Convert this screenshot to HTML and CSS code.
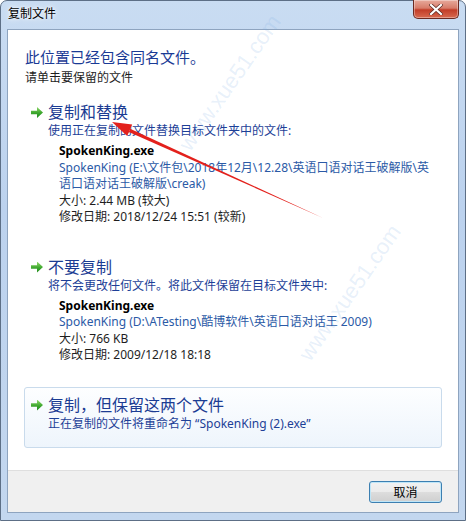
FILE: index.html
```html
<!DOCTYPE html>
<html>
<head>
    <meta charset="UTF-8">
    <title>复制文件</title>
    <link rel="stylesheet" href="styles.css">
</head>
<body>
    <div class="window">
        <div class="titlebar">
            <span class="title">复制文件</span>
            <button class="close-btn" aria-label="关闭">
                <svg width="14" height="11" viewBox="0 0 14 11">
                    <path d="M2 1 L12 10 M12 1 L2 10" stroke="#5a2a22" stroke-width="3.6" stroke-linecap="square"/>
                    <path d="M2 1 L12 10 M12 1 L2 10" stroke="#fff" stroke-width="2.2" stroke-linecap="square"/>
                </svg>
            </button>
        </div>

        <div class="client">
            <div class="content">
                <h1 class="main-instruction">此位置已经包含同名文件。</h1>
                <p class="hint">请单击要保留的文件</p>

                <div class="option">
                    <span class="arrow"></span>
                    <div class="option-body">
                        <div class="option-title">复制和替换</div>
                        <div class="option-desc">使用正在复制的文件替换目标文件夹中的文件:</div>
                        <div class="file-info">
                            <div class="file-name">SpokenKing.exe</div>
                            <div class="file-path">SpokenKing (E:\文件包\2018年12月\12.28\英语口语对话王破解版\英语口语对话王破解版\creak)</div>
                            <div>大小: 2.44 MB (较大)</div>
                            <div>修改日期: 2018/12/24 15:51 (较新)</div>
                        </div>
                    </div>
                </div>

                <div class="option">
                    <span class="arrow"></span>
                    <div class="option-body">
                        <div class="option-title">不要复制</div>
                        <div class="option-desc">将不会更改任何文件。将此文件保留在目标文件夹中:</div>
                        <div class="file-info">
                            <div class="file-name">SpokenKing.exe</div>
                            <div class="file-path">SpokenKing (D:\ATesting\酷博软件\英语口语对话王 2009)</div>
                            <div>大小: 766 KB</div>
                            <div>修改日期: 2009/12/18 18:18</div>
                        </div>
                    </div>
                </div>

                <div class="option focused">
                    <span class="arrow"></span>
                    <div class="option-body">
                        <div class="option-title">复制，但保留这两个文件</div>
                        <div class="option-desc">正在复制的文件将重命名为 “SpokenKing (2).exe”</div>
                    </div>
                </div>
            </div>

            <div class="footer">
                <button class="btn">取消</button>
            </div>
        </div>
    </div>

    <!-- red annotation arrow drawn over the dialog -->
    <svg class="annotation" width="466" height="521" viewBox="0 0 466 521">
        <polygon points="323,218 130.2,128.8 128.8,132 " fill="#e3211c"/>
        <polygon points="112,122 132.2,124.6 127.2,136" fill="#e3211c"/>
    </svg>

    <div class="watermark wm-1">www.xue51.com</div>
    <div class="watermark wm-2">www.xue51.com</div>
</body>
</html>
```

FILE: styles.css
```css
* {
    box-sizing: border-box;
}

body {
    margin: 0;
    width: 466px;
    height: 521px;
    font-family: "Noto Sans", "Noto Sans CJK SC", sans-serif;
    font-size: 12px;
    color: #1e1e1e;
    overflow: hidden;
    position: relative;
}

.window {
    width: 466px;
    height: 521px;
    display: flex;
    flex-direction: column;
    padding: 0 6px 7px;
    border: 1px solid #5d6f86;
    border-radius: 7px 7px 0 0;
    background: linear-gradient(180deg, #c9dcf2 0%, #bcd2ee 40%, #c3d7ef 100%);
}

.titlebar {
    height: 28px;
    display: flex;
    justify-content: space-between;
    align-items: flex-start;
}

.title {
    padding: 4px 0 0 1px;
    line-height: 17px;
    color: #000;
    text-shadow: 0 0 6px #fff, 0 0 3px #fff;
}

.close-btn {
    width: 46px;
    height: 19px;
    margin-top: -1px;
    padding: 0;
    display: flex;
    align-items: center;
    justify-content: center;
    border: 1px solid #6b2a22;
    border-top: none;
    border-radius: 0 0 5px 5px;
    background: linear-gradient(180deg, #e7aa9c 0%, #d77c6a 45%, #c23d28 55%, #d86a50 100%);
    box-shadow: inset 0 0 0 1px rgba(255, 255, 255, 0.35);
}

.client {
    flex: 1;
    display: flex;
    flex-direction: column;
    border: 1px solid #8ea4bf;
    background: #fff;
}

.content {
    flex: 1;
    padding: 17px 16px 0;
}

.main-instruction {
    margin: 0 0 2px 1px;
    font-size: 15px;
    font-weight: normal;
    line-height: 20px;
    color: #1a3a95;
}

.hint {
    margin: 0 0 8px 1px;
    line-height: 17px;
}

.option {
    display: grid;
    grid-template-columns: 17px 1fr;
    padding: 7px 8px 15px 6px;
    margin-bottom: 7px;
    border: 1px solid transparent;
    border-radius: 3px;
}

.option.focused {
    border-color: #c9dbec;
    background: linear-gradient(180deg, #fdfeff 0%, #eef5fc 100%);
}

.arrow {
    width: 12px;
    height: 11px;
    margin-top: 5px;
    background: linear-gradient(180deg, #8fd86a 0%, #3aa52c 55%, #1f8a1c 100%);
    clip-path: polygon(0 35%, 50% 35%, 50% 0, 100% 50%, 50% 100%, 50% 65%, 0 65%);
}

.option-title {
    font-size: 16px;
    line-height: 20px;
    color: #1b3c93;
}

.option-desc {
    line-height: 17px;
    color: #1d3f97;
}

.file-info {
    margin: 4px 0 0 11px;
    line-height: 16.5px;
}

.file-name {
    font-weight: bold;
    color: #000;
}

.file-path {
    color: #2b5aa6;
}

.footer {
    height: 42px;
    display: flex;
    justify-content: flex-end;
    align-items: center;
    padding: 0 16px;
    border-top: 1px solid #dfdfdf;
    background: #f0f0f0;
}

.btn {
    width: 73px;
    height: 22px;
    padding: 0;
    font-family: inherit;
    font-size: 12px;
    color: #000;
    border: 1px solid #3c7fb1;
    border-radius: 3px;
    background: linear-gradient(180deg, #f2f2f2 0%, #ebebeb 50%, #dddddd 51%, #cfcfcf 100%);
    box-shadow: inset 0 0 0 1px #bfe6f8;
}

.annotation {
    position: absolute;
    top: 0;
    left: 0;
    pointer-events: none;
}

.watermark {
    position: absolute;
    font-family: "Liberation Sans", sans-serif;
    font-size: 22px;
    color: rgba(120, 170, 225, 0.18);
    transform: rotate(-55deg);
    pointer-events: none;
    white-space: nowrap;
}

.wm-1 {
    top: 70px;
    left: 150px;
}

.wm-2 {
    top: 280px;
    left: 270px;
}
```
